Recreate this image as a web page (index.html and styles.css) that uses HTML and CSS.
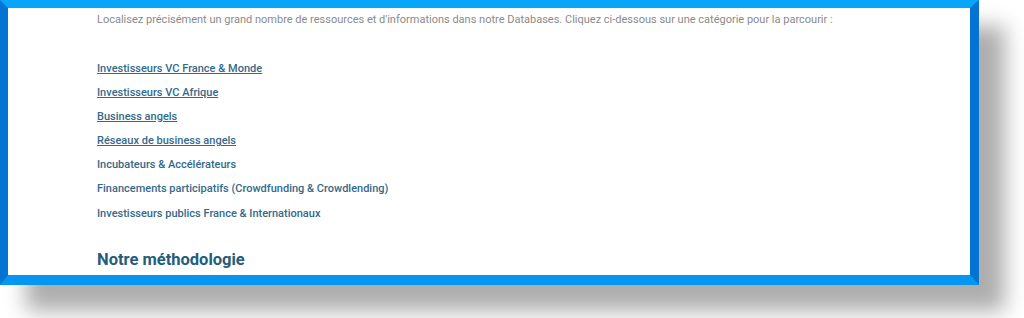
FILE: index.html
```html
<!DOCTYPE html>
<html>
<head>
    <meta charset="UTF-8">
    <title>Databases</title>
    <link rel="stylesheet" href="styles.css">
</head>
<body>
    <div class="frame">
        <div class="content">
            <p class="intro">Localisez précisément un grand nombre de ressources et d'informations dans notre Databases. Cliquez ci-dessous sur une catégorie pour la parcourir :</p>
            <ul class="cats">
                <li><a class="linked" href="#">Investisseurs VC France &amp; Monde</a></li>
                <li><a class="linked" href="#">Investisseurs VC Afrique</a></li>
                <li><a class="linked" href="#">Business angels</a></li>
                <li><a class="linked" href="#">Réseaux de business angels</a></li>
                <li><a href="#">Incubateurs &amp; Accélérateurs</a></li>
                <li><a href="#">Financements participatifs (Crowdfunding &amp; Crowdlending)</a></li>
                <li><a href="#">Investisseurs publics France &amp; Internationaux</a></li>
            </ul>
            <h2 class="title">Notre méthodologie</h2>
        </div>
    </div>
</body>
</html>
```

FILE: styles.css
```css
html{
    overflow:hidden;
}
body{
    margin:0;
    padding:0;
    height:318px;
    background:#fff;
}
.frame{
    width:962px;
    height:267px;
    border-style:solid;
    border-width:8px 9px 10px 8px;
    border-top-color:#08a6f8;
    border-bottom-color:#0596f2;
    border-left-color:#0474d3;
    border-right-color:#0474d3;
    background:#fff;
    box-shadow:26px 26px 20px rgba(0,0,0,0.32);
    overflow:hidden;
    font-family:Roboto, "Liberation Sans", sans-serif;
}
.content{
    padding:4px 0 0 89px;
}
.intro{
    margin:0;
    font-size:11px;
    line-height:16px;
    color:#8a8a8a;
}
.cats{
    list-style:none;
    margin:33px 0 0;
    padding:0;
    display:flex;
    flex-direction:column;
    gap:8px;
}
.cats li{
    font-size:11px;
    line-height:16px;
    font-weight:500;
}
.cats li:last-child{
    margin-top:1px;
}
.cats a{
    color:#35698a;
    text-decoration:none;
}
.cats a.linked{
    text-decoration:underline;
}
.title{
    margin:27px 0 0;
    font-size:16.5px;
    line-height:22px;
    font-weight:700;
    color:#245d7c;
}
```
